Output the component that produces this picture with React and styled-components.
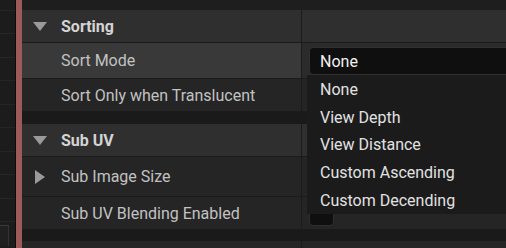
import React from "react";
import styled, { createGlobalStyle } from "styled-components";

const Global = createGlobalStyle`
  html, body { margin: 0; padding: 0; background: #1c1c1c; overflow: hidden; }
  body { font-family: Roboto, "Liberation Sans", sans-serif; }
`;

const Page = styled.div`
  display: flex;
  width: 506px;
  height: 248px;
  overflow: hidden;
  position: relative;
`;

const LeftStrip = styled.div`
  width: 15px;
  flex: none;
  background: #1c1c1c;
  display: flex;
  flex-direction: column;
`;

const StripSpacer = styled.div`
  height: 9.5px;
  flex: none;
  border-bottom: 1px solid #262626;
`;

const StripItem = styled.div`
  height: 22.5px;
  flex: none;
  border-bottom: 1px solid #262626;
`;

const StripBox = styled.div`
  margin-top: 3px;
  height: 20px;
  width: 8px;
  border-top: 1px solid #3a3a3a;
  border-right: 1px solid #333;
  background: #202020;
`;

const Divider = styled.div`
  width: 1px;
  flex: none;
  background: #0c0c0c;
`;

const Accent = styled.div`
  width: 6px;
  flex: none;
  background: #9c5a5b;
`;

const Panel = styled.div`
  flex: 1;
  display: flex;
  flex-direction: column;
  background: #1a1a1a;
  position: relative;
`;

const TopBand = styled.div`
  height: 10px;
  flex: none;
  background: #1e1e1e;
`;

const Gap = styled.div`
  height: ${(p) => p.h}px;
  flex: none;
  background: #1a1a1a;
`;

const Row = styled.div`
  display: grid;
  grid-template-columns: 279px 1px 1fr;
  height: ${(p) => p.h}px;
  flex: none;
  border-bottom: 1px solid #1b1b1b;
`;

const NameCell = styled.div`
  display: flex;
  align-items: center;
  background: ${(p) => (p.$header ? "#2f2f2f" : p.$hover ? "#393939" : "#252525")};
  color: ${(p) => (p.$header ? "#d4d4d4" : "#c2c2c2")};
  font-weight: ${(p) => (p.$header ? 700 : 400)};
  font-size: 16px;
  padding-left: 11px;
`;

const Split = styled.div`
  background: #1b1b1b;
`;

const ValueCell = styled.div`
  background: ${(p) => (p.$header ? "#2f2f2f" : p.$hover ? "#2b2b2b" : "#252525")};
  padding: 4px 0 0 7px;
  overflow: hidden;
`;

const IconSlot = styled.span`
  width: 28px;
  box-sizing: border-box;
  padding-left: ${(p) => p.$indent || 0}px;
  flex: none;
  display: flex;
  align-items: center;
`;

const Combo = styled.div`
  width: 220px;
  height: 28px;
  box-sizing: border-box;
  background: #0f0f0f;
  border: 1px solid #303030;
  border-radius: 4px;
  display: flex;
  align-items: center;
  padding-left: 10px;
  color: #f2f2f2;
  font-size: 16px;
`;

const Check = styled.div`
  margin-top: 1px;
  width: 25px;
  height: 24px;
  box-sizing: border-box;
  background: #0f0f0f;
  border: 1px solid #2e2e2e;
  border-radius: 4px;
`;

const Menu = styled.div`
  position: absolute;
  left: 285px;
  top: 75px;
  width: 230px;
  background: #1b1b1b;
  padding-top: 1px;
  height: 139px;
  box-sizing: border-box;
  overflow: hidden;
`;

const MenuItem = styled.div`
  height: 27.6px;
  display: flex;
  align-items: center;
  padding-left: 13px;
  color: #e2e2e2;
  font-size: 16px;
`;

const DownTri = () => (
  <svg width="14" height="9" viewBox="0 0 14 9">
    <path d="M0 0 H14 L7 9 Z" fill="#9a9a9a" />
  </svg>
);

const RightTri = () => (
  <svg width="10" height="14" viewBox="0 0 10 14">
    <path d="M0 0 L10 7 L0 14 Z" fill="#9a9a9a" />
  </svg>
);

const options = ["None", "View Depth", "View Distance", "Custom Ascending", "Custom Decending"];

export default function App() {
  return (
    <>
      <Global />
      <Page>
        <LeftStrip>
          <StripSpacer />
          {Array.from({ length: 9 }).map((_, i) => (
            <StripItem key={i} />
          ))}
          <StripBox />
        </LeftStrip>
        <Divider />
        <Accent />
        <Panel>
          <TopBand />
          <Row h={32}>
            <NameCell $header>
              <IconSlot><DownTri /></IconSlot>Sorting
            </NameCell>
            <Split />
            <ValueCell $header />
          </Row>
          <Row h={35}>
            <NameCell $hover>
              <IconSlot />Sort Mode
            </NameCell>
            <Split />
            <ValueCell $hover>
              <Combo>None</Combo>
            </ValueCell>
          </Row>
          <Row h={32}>
            <NameCell>
              <IconSlot />Sort Only when Translucent
            </NameCell>
            <Split />
            <ValueCell />
          </Row>
          <Gap h={12} />
          <Row h={32}>
            <NameCell $header>
              <IconSlot><DownTri /></IconSlot>Sub UV
            </NameCell>
            <Split />
            <ValueCell $header />
          </Row>
          <Row h={39}>
            <NameCell>
              <IconSlot $indent={2}><RightTri /></IconSlot>Sub Image Size
            </NameCell>
            <Split />
            <ValueCell />
          </Row>
          <Row h={32}>
            <NameCell>
              <IconSlot />Sub UV Blending Enabled
            </NameCell>
            <Split />
            <ValueCell>
              <Check />
            </ValueCell>
          </Row>
          <Gap h={11} />
          <Row h={30}>
            <NameCell />
            <Split />
            <ValueCell />
          </Row>
          <Menu>
            {options.map((o) => (
              <MenuItem key={o}>{o}</MenuItem>
            ))}
          </Menu>
        </Panel>
      </Page>
    </>
  );
}
